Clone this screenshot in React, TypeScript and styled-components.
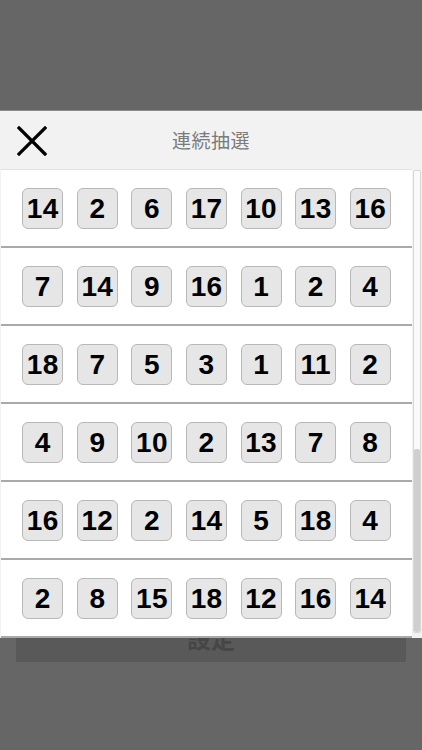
import React from 'react';
import styled, { createGlobalStyle } from 'styled-components';

const draws = [
	[14, 2, 6, 17, 10, 13, 16],
	[7, 14, 9, 16, 1, 2, 4],
	[18, 7, 5, 3, 1, 11, 2],
	[4, 9, 10, 2, 13, 7, 8],
	[16, 12, 2, 14, 5, 18, 4],
	[2, 8, 15, 18, 12, 16, 14],
];

const GlobalStyle = createGlobalStyle`
	html, body {
		margin: 0;
		padding: 0;
		background: #666666;
		font-family: 'Liberation Sans', 'Noto Sans CJK JP', sans-serif;
	}
`;

export default () => {
	return (
		<Page>
			<GlobalStyle />
			<SettingButton>設定</SettingButton>
			<Modal>
				<Header>
					<CloseButton aria-label="close">
						<svg width="30" height="30" viewBox="0 0 30 30">
							<path d="M2 2 L28 28 M28 2 L2 28" stroke="#000" strokeWidth="3.2" strokeLinecap="square" />
						</svg>
					</CloseButton>
					<Title>連続抽選</Title>
					<span />
				</Header>
				<Body>
					<List>
						{draws.map((row, i) => (
							<Row key={i}>
								{row.map((n, j) => (
									<Chip key={j}>{n}</Chip>
								))}
							</Row>
						))}
					</List>
					<ScrollTrack>
						<ScrollThumb />
					</ScrollTrack>
				</Body>
			</Modal>
		</Page>
	);
};

const Page = styled.div`
	position: relative;
	height: 750px;
	overflow: hidden;
	background: #666666;
	padding-top: 612px;
	box-sizing: border-box;
`;

const SettingButton = styled.div`
	margin: 0 16px;
	height: 50px;
	background: #595959;
	color: #464646;
	font-family: 'Noto Sans CJK JP', sans-serif;
	font-weight: 700;
	font-size: 24px;
	display: flex;
	align-items: center;
	justify-content: center;
`;

const Modal = styled.div`
	position: absolute;
	top: 110px;
	left: 0;
	right: 0;
	border-top: 1px solid #8a8a8a;
	background: #f2f2f2;
`;

const Header = styled.div`
	height: 58px;
	display: grid;
	grid-template-columns: 64px 1fr 64px;
	align-items: center;
`;

const CloseButton = styled.div`
	display: flex;
	padding-left: 17px;
	padding-top: 2px;
`;

const Title = styled.div`
	text-align: center;
	font-family: 'Noto Sans CJK JP', sans-serif;
	font-size: 19px;
	color: #7a7a7a;
	letter-spacing: 0.5px;
	padding-bottom: 2px;
`;

const Body = styled.div`
	display: flex;
	align-items: stretch;
`;

const List = styled.div`
	flex: 1;
	margin-left: 1px;
	background: #ffffff;
	border-top: 1px solid #e2e2e2;
`;

const Row = styled.div`
	height: 78px;
	border-bottom: 2px solid #a9a9a9;
	display: flex;
	align-items: center;
	justify-content: center;
	gap: 13.6px;
	padding-top: 1px;
	box-sizing: border-box;
`;

const Chip = styled.div`
	width: 41px;
	height: 41px;
	box-sizing: border-box;
	border: 1px solid #b8b8b8;
	border-radius: 6px;
	background: #e6e6e6;
	display: flex;
	align-items: center;
	justify-content: center;
	font-family: 'Liberation Sans', sans-serif;
	font-weight: 700;
	font-size: 28px;
	color: #000;
	letter-spacing: 0.3px;
`;

const ScrollTrack = styled.div`
	width: 6px;
	margin: 1px 1px 5px 1px;
	background: #fafafa;
	border: 1px solid #d8d8d8;
	border-radius: 2px;
	display: flex;
	flex-direction: column;
	justify-content: flex-end;
`;

const ScrollThumb = styled.div`
	height: 183px;
	background: #cfcfcf;
	border-radius: 2px;
`;
